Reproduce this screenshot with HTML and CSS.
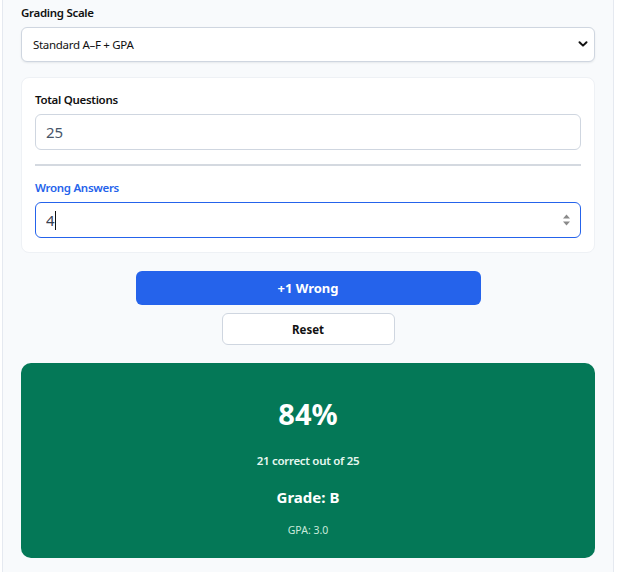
FILE: index.html
```html
<!DOCTYPE html>
<html lang="en">
<head>
  <meta charset="UTF-8">
  <meta name="viewport" content="width=device-width, initial-scale=1.0">
  <title>Grade Calculator</title>
  <link rel="stylesheet" href="styles.css">
</head>
<body>
  <div class="panel">
    <label class="field-label" for="scale">Grading Scale</label>
    <div class="select-wrap">
      <select id="scale" class="select">
        <option>Standard A–F + GPA</option>
        <option>Pass / Fail</option>
      </select>
      <svg class="chevron" width="10" height="8" viewBox="0 0 10 8">
        <path d="M1.5 2.2 L5 5.6 L8.5 2.2" fill="none" stroke="#111" stroke-width="2" stroke-linecap="round" stroke-linejoin="round"/>
      </svg>
    </div>

    <div class="card">
      <label class="field-label" for="total">Total Questions</label>
      <input id="total" class="input" type="text" value="25">
      <hr class="divider">
      <label class="field-label active" for="wrong">Wrong Answers</label>
      <div class="input-wrap">
        <input id="wrong" class="input focused" type="text" value="4">
        <span class="caret"></span>
        <svg class="spinner" width="9" height="14" viewBox="0 0 9 14">
          <path d="M1 5.5 L4.5 1.5 L8 5.5 Z" fill="#8a8a8a"/>
          <path d="M1 8.5 L4.5 12.5 L8 8.5 Z" fill="#8a8a8a"/>
        </svg>
      </div>
    </div>

    <div class="actions">
      <button class="btn-primary">+1 Wrong</button>
      <button class="btn-secondary">Reset</button>
    </div>

    <div class="result">
      <div class="percent">84%</div>
      <div class="count">21 correct out of 25</div>
      <div class="grade">Grade: B</div>
      <div class="gpa">GPA: 3.0</div>
    </div>
  </div>
</body>
</html>
```

FILE: styles.css
```css
body {
  margin: 0;
  background: #ffffff;
  font-family: "Noto Sans", "Open Sans", Arial, sans-serif;
  color: #111827;
}
.panel {
  margin: 0 3px 0 2px;
  padding: 5px 18px 30px 18px;
  background: #f8fafc;
  border-left: 1px solid #e5e9f0;
  border-right: 1px solid #e5e9f0;
}
.field-label {
  display: block;
  font-size: 11.5px;
  font-weight: 600;
  letter-spacing: -0.3px;
  line-height: 16px;
  margin-bottom: 6px;
  color: #111;
}
.field-label.active {
  color: #2563eb;
}
.select-wrap {
  position: relative;
}
.select {
  appearance: none;
  -webkit-appearance: none;
  width: 100%;
  height: 35px;
  padding: 0 12px 0 11px;
  font-family: inherit;
  font-size: 11.5px;
  letter-spacing: -0.3px;
  color: #111;
  background: #fff;
  border: 1px solid #cfd6e0;
  border-radius: 6px;
  box-shadow: 0 1px 2px rgba(15, 23, 42, 0.08);
}
.chevron {
  position: absolute;
  right: 7px;
  top: 13px;
}
.card {
  margin-top: 15px;
  padding: 14px 13px 14px;
  background: #fff;
  border: 1px solid #eef1f5;
  border-radius: 8px;
}
.input-wrap {
  position: relative;
}
.input {
  box-sizing: border-box;
  width: 100%;
  height: 36px;
  padding: 0 10px;
  font-family: inherit;
  font-size: 15px;
  color: #475569;
  background: #fff;
  border: 1px solid #cfd6e0;
  border-radius: 6px;
  outline: none;
}
.input.focused {
  border-color: #2563eb;
  color: #374151;
}
.caret {
  position: absolute;
  left: 20px;
  top: 9px;
  width: 1px;
  height: 19px;
  background: #111;
}
.spinner {
  position: absolute;
  right: 10px;
  top: 11px;
}
.divider {
  border: 0;
  border-top: 2px solid #d4d9e0;
  margin: 14px 0 14px;
}
.actions {
  display: flex;
  flex-direction: column;
  align-items: center;
  gap: 8px;
  margin-top: 18px;
}
.btn-primary {
  width: 345px;
  height: 34px;
  font-family: inherit;
  font-size: 13px;
  font-weight: 700;
  color: #fff;
  background: #2563eb;
  border: 0;
  border-radius: 6px;
}
.btn-secondary {
  width: 173px;
  height: 32px;
  font-family: inherit;
  font-size: 11.5px;
  font-weight: 700;
  color: #111;
  background: #fff;
  border: 1px solid #cfd6e0;
  border-radius: 6px;
}
.result {
  margin-top: 18px;
  padding: 29px 16px 21px;
  background: #047857;
  border-radius: 10px;
  color: #fff;
  text-align: center;
}
.percent {
  font-size: 29px;
  font-weight: 700;
  line-height: 44px;
}
.count {
  margin-top: 17px;
  font-size: 11.5px;
  font-weight: 600;
  letter-spacing: -0.3px;
  color: #e6f7ef;
}
.grade {
  margin-top: 18px;
  font-size: 15px;
  font-weight: 700;
  line-height: 22px;
}
.gpa {
  margin-top: 15px;
  font-size: 10.5px;
  color: #c9eadb;
}
```
